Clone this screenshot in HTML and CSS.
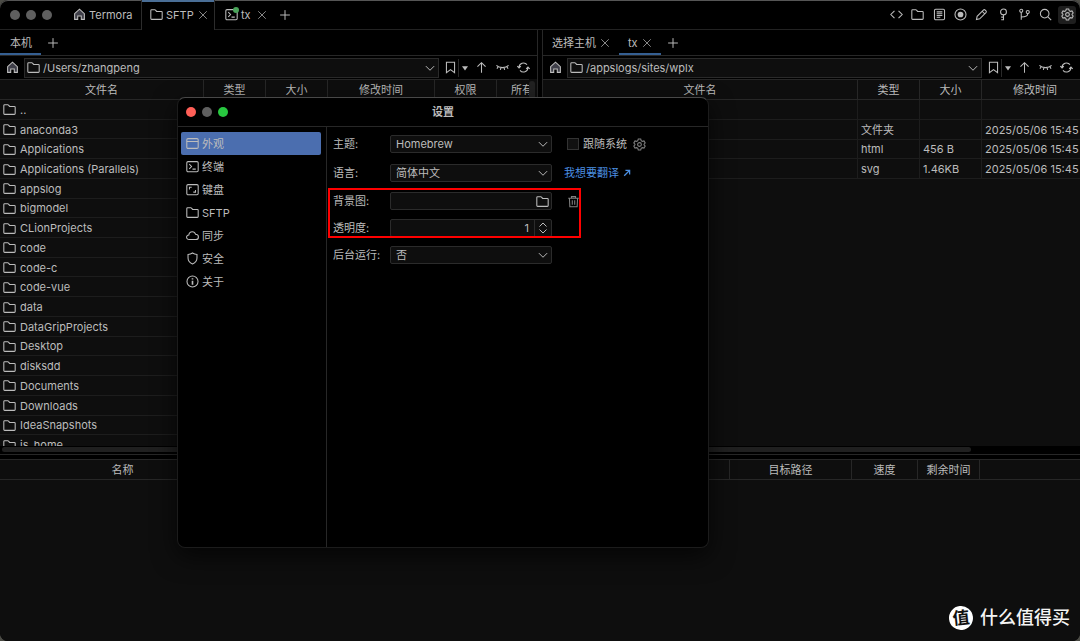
FILE: index.html
```html
<!DOCTYPE html>
<html lang="zh-CN">
<head>
<meta charset="utf-8">
<meta name="viewport" content="width=device-width, initial-scale=1">
<title>Termora</title>
<link rel="stylesheet" href="styles.css">
</head>
<body>
<svg class="sprite" aria-hidden="true">
  <symbol id="i-folder" viewBox="0 0 16 16"><path d="M1 3.200c0-.6.4-1 1-1h4c.3 0 .6.1.8.4l1.300 1.600h5.900c.6 0 1 .4 1 1v7.800c0 .6-.4 1-1 1H2c-.6 0-1-.4-1-1z"/></symbol>
  <symbol id="i-home" viewBox="0 0 16 16"><path class="tint" d="M2 7 8 1.500 14 7v7h-3.800V9.800H5.800V14H2z"/></symbol>
  <symbol id="i-close" viewBox="0 0 16 16"><path d="M3 3l10 10M13 3 3 13"/></symbol>
  <symbol id="i-plus" viewBox="0 0 16 16"><path d="M8 1.500v13M1.500 8h13"/></symbol>
  <symbol id="i-terminal" viewBox="0 0 16 16"><rect x="1" y="2" width="14" height="12.500" rx="1.500"/><path d="M4 5.200 6.800 8 4 10.800M8 11.200h4"/></symbol>
  <symbol id="i-code" viewBox="0 0 16 16"><path d="M5.500 3.500 1 8l4.500 4.500M10.500 3.500 15 8l-4.500 4.500"/></symbol>
  <symbol id="i-log" viewBox="0 0 16 16"><rect x="1.800" y="1.500" width="12.400" height="13" rx="1.500"/><path d="M4.500 4.800h7M4.500 7h7M4.500 9.200h7M4.500 11.400h4.500"/></symbol>
  <symbol id="i-record" viewBox="0 0 16 16"><circle cx="8" cy="8" r="6.800"/><circle class="solid" cx="8" cy="8" r="3.500"/></symbol>
  <symbol id="i-pencil" viewBox="0 0 16 16"><path d="M1.800 14.200l.8-4L10.300 2.500c.7-.7 1.600-.7 2.300 0l.9.9c.7.7.7 1.600 0 2.300L5.800 13.400zM8.800 4l3.200 3.200"/></symbol>
  <symbol id="i-key" viewBox="0 0 16 16"><circle cx="8" cy="4.800" r="3.600"/><path d="M8 8.400v6.800M8 11.200H5.200M8 14.400H5.200"/></symbol>
  <symbol id="i-branch" viewBox="0 0 16 16"><circle cx="4" cy="3.500" r="1.900"/><circle cx="12" cy="5" r="1.900"/><path d="M4 5.400v9.100M12 7c0 3-2 4-8 4"/></symbol>
  <symbol id="i-search" viewBox="0 0 16 16"><circle cx="7" cy="7" r="5.300"/><path d="M11 11l4 4"/></symbol>
  <symbol id="i-gear" viewBox="0 0 16 16"><path d="M6.500 1.300h3l.6 2 1.300.8 2.100-.5 1.500 2.600L13.600 7.700v.6l1.400 1.500-1.500 2.600-2.100-.5-1.300.8-.6 2h-3l-.6-2-1.300-.8-2.100.5L1 9.800l1.400-1.500v-.6L1 6.200l1.500-2.600 2.100.5 1.300-.8z"/><circle cx="8" cy="8" r="2.300"/></symbol>
  <symbol id="i-bookmark" viewBox="0 0 16 16"><path d="M3 1.500h10v13l-5-3.800-5 3.800z"/></symbol>
  <symbol id="i-caret" viewBox="0 0 8 8"><path class="solid" d="M1 2.200h6L4 6.500z"/></symbol>
  <symbol id="i-up" viewBox="0 0 16 16"><path d="M8 14.500V2M3 7l5-5 5 5"/></symbol>
  <symbol id="i-lash" viewBox="0 0 16 16"><path d="M.5 5.500C4 9 12 9 15.500 5.500M2.500 7.200 1.200 9.500M6 8.300l-.6 2.500M10 8.300l.6 2.500M13.500 7.200l1.300 2.300"/></symbol>
  <symbol id="i-refresh" viewBox="0 0 16 16"><path d="M2.500 8A5.500 5.500 0 0 1 12.300 4.500M13.500 8a5.500 5.500 0 0 1-9.800 3.500M.3 6.300 2.500 8.500l2.200-2.200M11.300 9.700l2.200-2.200 2.200 2.200"/></symbol>
  <symbol id="i-chevron" viewBox="0 0 16 16"><path d="M2.500 5.500 8 11l5.500-5.500"/></symbol>
  <symbol id="i-window" viewBox="0 0 16 16"><rect x="1" y="2" width="14" height="12" rx="1.500"/><path d="M1 5.500h14"/></symbol>
  <symbol id="i-keyboard" viewBox="0 0 16 16"><rect x="1" y="2" width="14" height="12.500" rx="1.500"/><path d="M4.300 8V5.200H7M11.700 8.500v2.700H9"/></symbol>
  <symbol id="i-cloud" viewBox="0 0 16 16"><path d="M4 13C2 13 .7 11.800.7 10.200S2 7.500 3.500 7.300C3.800 4.800 5.500 3.300 7.700 3.300c2 0 3.500 1.200 4 3.100 2.200.1 3.600 1.500 3.600 3.300S13.900 13 12 13z"/></symbol>
  <symbol id="i-shield" viewBox="0 0 16 16"><path d="M8 1.200c1.800 1.200 3.500 1.700 5.500 1.800v4.500c0 3.500-2.200 5.800-5.500 7.300-3.300-1.500-5.500-3.800-5.500-7.300V3C4.500 2.900 6.200 2.400 8 1.200z"/></symbol>
  <symbol id="i-info" viewBox="0 0 16 16"><circle cx="8" cy="8" r="6.800"/><path d="M8 7v5M8 4v1.600" stroke-width="2"/></symbol>
  <symbol id="i-trash" viewBox="0 0 16 16"><path d="M1.500 4h13M5.500 4V2h5v2M3 4l.5 10.500h9L13 4M6.500 6.500v5.500M9.500 6.500v5.500"/></symbol>
  <symbol id="i-link" viewBox="0 0 16 16"><path d="M3.500 12.500 12 4M5.500 3.800H12.200V10.500" stroke-width="2"/></symbol>
</svg>

<div class="app">
  <header class="titlebar">
    <div class="lights"><i></i><i></i><i></i></div>
    <nav class="tabs">
      <button class="tab tab-home"><svg class="icon"><use href="#i-home"/></svg>Termora</button>
      <div class="tab tab-active"><svg class="icon"><use href="#i-folder"/></svg><span class="tab-name">SFTP</span><button class="close" aria-label="关闭 SFTP"><svg class="icon-s"><use href="#i-close"/></svg></button></div>
      <div class="tab tab-tx"><span class="status"><svg class="icon"><use href="#i-terminal"/></svg></span><span class="tab-name">tx</span><button class="close" aria-label="关闭 tx"><svg class="icon-s"><use href="#i-close"/></svg></button></div>
      <button class="add" aria-label="新标签"><svg class="icon-p"><use href="#i-plus"/></svg></button>
    </nav>
    <div class="tools">
      <button aria-label="代码"><svg class="icon"><use href="#i-code"/></svg></button>
      <button aria-label="文件"><svg class="icon"><use href="#i-folder"/></svg></button>
      <button aria-label="日志"><svg class="icon"><use href="#i-log"/></svg></button>
      <button aria-label="录制"><svg class="icon"><use href="#i-record"/></svg></button>
      <button aria-label="编辑"><svg class="icon"><use href="#i-pencil"/></svg></button>
      <button aria-label="密钥"><svg class="icon"><use href="#i-key"/></svg></button>
      <button aria-label="分支"><svg class="icon"><use href="#i-branch"/></svg></button>
      <button aria-label="搜索"><svg class="icon"><use href="#i-search"/></svg></button>
      <button class="pressed" aria-label="设置"><svg class="icon"><use href="#i-gear"/></svg></button>
    </div>
  </header>

  <main class="panes">
    <section class="pane">
      <div class="subtabs">
        <div class="subtab selected">本机</div>
        <button class="add" aria-label="添加"><svg class="icon-p"><use href="#i-plus"/></svg></button>
      </div>
      <div class="pathbar">
        <button class="home" aria-label="主目录"><svg class="icon"><use href="#i-home"/></svg></button>
        <div class="path"><svg class="icon"><use href="#i-folder"/></svg><input type="text" value="/Users/zhangpeng" aria-label="本机路径"><button aria-label="展开"><svg class="icon-c"><use href="#i-chevron"/></svg></button></div>
        <div class="actions">
          <button aria-label="书签"><svg class="icon"><use href="#i-bookmark"/></svg></button>
          <button class="more" aria-label="书签列表"><svg class="icon-t"><use href="#i-caret"/></svg></button>
          <button aria-label="上级"><svg class="icon"><use href="#i-up"/></svg></button>
          <button aria-label="隐藏文件"><svg class="icon"><use href="#i-lash"/></svg></button>
          <button aria-label="刷新"><svg class="icon"><use href="#i-refresh"/></svg></button>
        </div>
      </div>
      <div class="files">
        <div class="scroller">
          <table class="grid local">
            <colgroup><col><col class="c-mid"><col class="c-mid"><col class="c-time"><col class="c-mid"><col class="c-mid"></colgroup>
            <thead><tr><th>文件名</th><th>类型</th><th>大小</th><th>修改时间</th><th>权限</th><th>所有者</th></tr></thead>
            <tbody>
              <tr><td><span class="file"><svg class="icon"><use href="#i-folder"/></svg>..</span></td><td colspan="5"></td></tr>
              <tr><td><span class="file"><svg class="icon"><use href="#i-folder"/></svg>anaconda3</span></td><td colspan="5"></td></tr>
              <tr><td><span class="file"><svg class="icon"><use href="#i-folder"/></svg>Applications</span></td><td colspan="5"></td></tr>
              <tr><td><span class="file"><svg class="icon"><use href="#i-folder"/></svg>Applications (Parallels)</span></td><td colspan="5"></td></tr>
              <tr><td><span class="file"><svg class="icon"><use href="#i-folder"/></svg>appslog</span></td><td colspan="5"></td></tr>
              <tr><td><span class="file"><svg class="icon"><use href="#i-folder"/></svg>bigmodel</span></td><td colspan="5"></td></tr>
              <tr><td><span class="file"><svg class="icon"><use href="#i-folder"/></svg>CLionProjects</span></td><td colspan="5"></td></tr>
              <tr><td><span class="file"><svg class="icon"><use href="#i-folder"/></svg>code</span></td><td colspan="5"></td></tr>
              <tr><td><span class="file"><svg class="icon"><use href="#i-folder"/></svg>code-c</span></td><td colspan="5"></td></tr>
              <tr><td><span class="file"><svg class="icon"><use href="#i-folder"/></svg>code-vue</span></td><td colspan="5"></td></tr>
              <tr><td><span class="file"><svg class="icon"><use href="#i-folder"/></svg>data</span></td><td colspan="5"></td></tr>
              <tr><td><span class="file"><svg class="icon"><use href="#i-folder"/></svg>DataGripProjects</span></td><td colspan="5"></td></tr>
              <tr><td><span class="file"><svg class="icon"><use href="#i-folder"/></svg>Desktop</span></td><td colspan="5"></td></tr>
              <tr><td><span class="file"><svg class="icon"><use href="#i-folder"/></svg>disksdd</span></td><td colspan="5"></td></tr>
              <tr><td><span class="file"><svg class="icon"><use href="#i-folder"/></svg>Documents</span></td><td colspan="5"></td></tr>
              <tr><td><span class="file"><svg class="icon"><use href="#i-folder"/></svg>Downloads</span></td><td colspan="5"></td></tr>
              <tr><td><span class="file"><svg class="icon"><use href="#i-folder"/></svg>IdeaSnapshots</span></td><td colspan="5"></td></tr>
              <tr><td><span class="file"><svg class="icon"><use href="#i-folder"/></svg>js_home</span></td><td colspan="5"></td></tr>
            </tbody>
          </table>
        </div>
        <div class="vbar"><i></i></div>
      </div>
      <div class="hbar"><i></i></div>
    </section>

    <section class="pane">
      <div class="subtabs">
        <div class="subtab host">选择主机<button class="close" aria-label="关闭"><svg class="icon-s"><use href="#i-close"/></svg></button></div>
        <div class="subtab host selected">tx<button class="close" aria-label="关闭 tx"><svg class="icon-s"><use href="#i-close"/></svg></button></div>
        <button class="add" aria-label="添加"><svg class="icon-p"><use href="#i-plus"/></svg></button>
      </div>
      <div class="pathbar">
        <button class="home" aria-label="主目录"><svg class="icon"><use href="#i-home"/></svg></button>
        <div class="path"><svg class="icon"><use href="#i-folder"/></svg><input type="text" value="/appslogs/sites/wplx" aria-label="远程路径"><button aria-label="展开"><svg class="icon-c"><use href="#i-chevron"/></svg></button></div>
        <div class="actions">
          <button aria-label="书签"><svg class="icon"><use href="#i-bookmark"/></svg></button>
          <button class="more" aria-label="书签列表"><svg class="icon-t"><use href="#i-caret"/></svg></button>
          <button aria-label="上级"><svg class="icon"><use href="#i-up"/></svg></button>
          <button aria-label="隐藏文件"><svg class="icon"><use href="#i-lash"/></svg></button>
          <button aria-label="刷新"><svg class="icon"><use href="#i-refresh"/></svg></button>
        </div>
      </div>
      <div class="files">
        <div class="scroller">
          <table class="grid remote">
            <colgroup><col><col class="c-mid"><col class="c-mid"><col class="c-time"></colgroup>
            <thead><tr><th>文件名</th><th>类型</th><th>大小</th><th>修改时间</th></tr></thead>
            <tbody>
              <tr><td></td><td></td><td></td><td></td></tr>
              <tr><td></td><td>文件夹</td><td></td><td>2025/05/06 15:45</td></tr>
              <tr><td></td><td>html</td><td>456 B</td><td>2025/05/06 15:45</td></tr>
              <tr><td></td><td>svg</td><td>1.46KB</td><td>2025/05/06 15:45</td></tr>
            </tbody>
          </table>
        </div>
      </div>
      <div class="hbar short"><i></i></div>
    </section>
  </main>

  <section class="transfers">
    <table class="grid">
      <colgroup><col class="t-name"><col><col class="t-path"><col class="t-speed"><col class="t-left"><col class="t-rest"></colgroup>
      <thead><tr><th>名称</th><th></th><th>目标路径</th><th>速度</th><th>剩余时间</th><th></th></tr></thead>
    </table>
    <div class="brand"><span class="seal">值</span>什么值得买</div>
  </section>

  <div class="dialog" role="dialog" aria-labelledby="dlg-title">
    <header class="dialog-head">
      <div class="lights"><i class="red"></i><i></i><i class="green"></i></div>
      <h1 id="dlg-title">设置</h1>
    </header>
    <div class="dialog-body">
      <nav class="menu">
        <button class="on"><svg class="icon"><use href="#i-window"/></svg>外观</button>
        <button><svg class="icon"><use href="#i-terminal"/></svg>终端</button>
        <button><svg class="icon"><use href="#i-keyboard"/></svg>键盘</button>
        <button><svg class="icon"><use href="#i-folder"/></svg>SFTP</button>
        <button><svg class="icon"><use href="#i-cloud"/></svg>同步</button>
        <button><svg class="icon"><use href="#i-shield"/></svg>安全</button>
        <button><svg class="icon"><use href="#i-info"/></svg>关于</button>
      </nav>
      <form class="form">
        <label for="theme">主题:</label>
        <div class="control"><select id="theme"><option>Homebrew</option></select><svg class="icon-c"><use href="#i-chevron"/></svg></div>
        <div class="extra follow"><input type="checkbox" id="follow"><label for="follow">跟随系统</label><button type="button" class="dim" aria-label="主题设置"><svg class="icon"><use href="#i-gear"/></svg></button></div>

        <label for="lang">语言:</label>
        <div class="control"><select id="lang"><option>简体中文</option></select><svg class="icon-c"><use href="#i-chevron"/></svg></div>
        <div class="extra"><a href="#">我想要翻译<svg class="icon-l"><use href="#i-link"/></svg></a></div>

        <label for="bg">背景图:</label>
        <div class="control"><input type="text" id="bg"><button type="button" class="browse" aria-label="选择图片"><svg class="icon"><use href="#i-folder"/></svg></button></div>
        <div class="extra"><button type="button" class="dim trash" aria-label="清除"><svg class="icon"><use href="#i-trash"/></svg></button></div>

        <label for="alpha">透明度:</label>
        <div class="control"><input type="text" inputmode="decimal" id="alpha" class="num" value="1"><div class="spin"><button type="button" aria-label="增加"><svg viewBox="0 0 8 5"><path d="M.5 4.500 4 1l3.500 3.500"/></svg></button><button type="button" aria-label="减少"><svg viewBox="0 0 8 5"><path d="M.5.5 4 4 7.500.5"/></svg></button></div></div>
        <div class="extra"></div>

        <label for="daemon">后台运行:</label>
        <div class="control"><select id="daemon"><option>否</option></select><svg class="icon-c"><use href="#i-chevron"/></svg></div>
        <div class="extra"></div>
      </form>
    </div>
    <div class="marker"></div>
  </div>
</div>
</body>
</html>
```
FILE: styles.css
```css
:root {
  --text: #bcbcbc;
  --surface: #0e0e0e;
  --line: #272727;
  --blue: #355f92;
}
* { box-sizing: border-box; }
body {
  margin: 0;
  background: #4c4c46;
  color: var(--text);
  font: 11px/16px Inter, "Noto Sans CJK SC", sans-serif;
}
button, input, select {
  font: inherit;
  color: inherit;
  background: none;
  border: 0;
  padding: 0;
  margin: 0;
  outline: 0;
}
button { display: flex; align-items: center; justify-content: center; }
svg { fill: none; stroke: currentColor; stroke-width: 1.3; flex: none; display: block; }
.sprite { position: absolute; width: 0; height: 0; }
.solid { fill: currentColor; stroke: none; }
.tint { fill: #3f3f49; }
.icon { width: 13px; height: 13px; }
.icon-s { width: 12px; height: 12px; }
.icon-p { width: 12px; height: 12px; }
.icon-c { width: 12px; height: 12px; }
.icon-l { width: 10px; height: 10px; }
.icon-t { width: 8px; height: 8px; }

.app {
  position: relative;
  height: 100vh;
  display: grid;
  grid-template-rows: 30px minmax(0, 1fr) 182px;
  background: #000;
  border-radius: 8px;
  overflow: hidden;
  box-shadow: inset 0 1px #555;
}

.titlebar { display: flex; align-items: stretch; border-bottom: 1px solid #222; }
.lights { display: flex; align-items: center; gap: 6px; padding-left: 10px; }
.lights i { width: 10px; height: 10px; border-radius: 50%; background: #5f5f5f; }
.lights .red { background: #ff5f57; }
.lights .green { background: #28c840; }
.tabs { display: flex; flex: 1; margin-left: 21px; }
.tab { display: flex; align-items: center; justify-content: flex-start; gap: 3px; }
.tab-home { width: 68px; }
.tab-active {
  width: 74px;
  padding-left: 8px;
  border: 1px solid #2c2c2c;
  border-width: 0 1px;
  box-shadow: inset 0 2px #4a6e96;
  margin-bottom: -1px;
  padding-bottom: 1px;
  background: #000;
}
.tab-tx { width: 58px; padding-left: 10px; }
.tab .close { margin-left: auto; margin-right: 6px; }
.tab-tx .close { margin-right: 5px; }
.close { color: #8a8a8a; }
.status { position: relative; }
.status::after {
  content: "";
  position: absolute;
  top: -1px;
  right: -1px;
  width: 6px;
  height: 6px;
  border-radius: 50%;
  background: #4aa45a;
}
.add { width: 24px; }
.tools { display: grid; grid-template-columns: repeat(9, 1fr); width: 192px; margin-right: 2px; align-items: center; justify-items: center; }
.tools button { width: 18px; height: 18px; border-radius: 3px; }
.tools .pressed { background: #1e1e1e; }

.panes { display: grid; grid-template-columns: minmax(0, 1fr) minmax(0, 1fr); gap: 6px; padding-bottom: 4px; }
.pane { display: flex; flex-direction: column; min-height: 0; border: 0 solid var(--line); border-bottom-width: 1px; }
.pane:first-child { box-shadow: 1px 0 var(--line); }
.pane:last-child { box-shadow: -1px 0 var(--line); }
.subtabs { display: flex; height: 26px; border-bottom: 1px solid var(--line); }
.subtab { display: flex; align-items: center; gap: 3px; padding: 0 9px 0 10px; }
.subtab.host { padding: 0 8px 0 9px; }
.subtab.selected { box-shadow: inset 0 -2px var(--blue); }
.pathbar { display: flex; align-items: center; height: 23px; padding-right: 3px; }
.home { width: 24px; }
.path {
  flex: 1;
  min-width: 0;
  height: 20px;
  display: flex;
  align-items: center;
  gap: 3px;
  padding: 0 2px;
  background: var(--surface);
  border: 1px solid #2a2a2a;
}
.path input { flex: 1; min-width: 0; }
.path button { width: 12px; }
.actions { display: flex; padding-left: 4px; }
.actions button { width: 21px; height: 18px; }
.actions button:first-child { width: 15px; }
.actions .more { width: 13px; border-left: 1px solid #2a2a2a; }

.files { flex: 1; min-height: 0; display: flex; background: var(--surface); }
.scroller { flex: 1; min-width: 0; overflow: hidden; }
.grid { width: 100%; table-layout: fixed; border-collapse: separate; border-spacing: 0; background: var(--surface); }
.grid th, .grid td {
  padding: 0 3px;
  line-height: 16px;
  border: 0 solid #1d1d1d;
  border-width: 0 1px 1px 0;
  text-align: left;
  white-space: nowrap;
  overflow: hidden;
}
.grid td { height: 19px; padding-top: 1px; }
.grid th { font-weight: 400; text-align: center; border-color: var(--line); border-top-width: 1px; height: 21px; }
.local { width: calc(100% + 30px); height: 376px; }
.local td:first-child { border-right: 0; }
.remote { width: calc(100% + 9px); height: 100px; }
.c-mid { width: 62px; }
.c-time { width: 107px; }
.file { display: flex; align-items: center; gap: 4px; }
.vbar { width: 8px; padding: 2px 2px 0 0; }
.vbar i { display: block; height: 80%; border-radius: 3px; background: #222; }
.hbar { height: 8px; padding: 1px 8px 2px 2px; }
.hbar i { display: block; height: 5px; border-radius: 3px; background: #202020; }
.hbar.short { padding-right: 109px; }

.transfers { position: relative; background: var(--surface); }
.transfers th:last-child { border-right: 0; }
.t-name { width: 246px; }
.t-path { width: 122px; }
.t-speed { width: 66px; }
.t-left { width: 62px; }
.t-rest { width: 100px; }
.brand {
  position: absolute;
  right: 10px;
  bottom: 10px;
  display: flex;
  align-items: center;
  gap: 7px;
  color: #f4f4f4;
  font-size: 18px;
  font-weight: 500;
  line-height: 26px;
}
.seal {
  width: 24px;
  height: 24px;
  border-radius: 50%;
  background: #fff;
  color: #111;
  font-size: 17px;
  font-weight: 700;
  line-height: 24px;
  text-align: center;
  transform: rotate(-6deg);
}

.dialog {
  position: absolute;
  left: 177px;
  top: 97px;
  width: 532px;
  height: 451px;
  display: flex;
  flex-direction: column;
  background: #000;
  border: 1px solid #1c1c1c;
  border-top-color: #484848;
  border-radius: 8px;
  box-shadow: 0 8px 24px #000a;
}
.dialog-head { display: grid; grid-template-columns: 1fr auto 1fr; align-items: center; height: 29px; border-bottom: 1px solid var(--line); }
.dialog-head .lights { padding-left: 8px; }
.dialog h1 { margin: 0; font-size: 11px; line-height: 16px; font-weight: 700; }
.dialog-body { flex: 1; display: flex; }
.menu { width: 149px; padding: 5px 5px 0 3px; border-right: 1px solid var(--line); }
.menu button { width: 100%; height: 23px; justify-content: flex-start; gap: 3px; padding-left: 5px; border-radius: 2px; }
.menu .on { background: #4b6eaf; }
.form { flex: 1; display: grid; grid-template-columns: 57px 162px 1fr; grid-template-rows: 20px 20px 18px 18px 18px; row-gap: 9px; padding: 7px 6px; align-items: center; align-content: start; }
.control {
  position: relative;
  display: flex;
  align-items: center;
  height: 18px;
  background: var(--surface);
  border: 1px solid #2b2b2b;
  border-radius: 2px;
}
.control select { appearance: none; width: 100%; height: 16px; padding: 0 20px 0 5px; }
.control > .icon-c { position: absolute; right: 2px; pointer-events: none; }
.control input { flex: 1; min-width: 0; height: 16px; padding: 0 5px; }
.control .num { text-align: right; }
.browse { width: 17px; }
.spin { width: 17px; height: 16px; display: flex; flex-direction: column; align-items: center; justify-content: center; gap: 2px; border-left: 1px solid #2b2b2b; }
.spin svg { width: 8px; height: 5px; stroke-width: 1; }
.extra { display: flex; align-items: center; padding-left: 12px; }
.follow { gap: 4px; padding-left: 15px; }
.follow input { appearance: none; width: 12px; height: 12px; background: #111; border: 1px solid #333; }
.follow button { margin-left: 2px; }
.dim { color: #808080; }
.trash { margin-left: 3px; }
.extra a { display: flex; align-items: center; gap: 3px; color: #4b8fe2; text-decoration: none; }
.marker {
  position: absolute;
  left: 150px;
  top: 90px;
  width: 253px;
  height: 50px;
  border: 2px solid #f00;
  pointer-events: none;
}
```
